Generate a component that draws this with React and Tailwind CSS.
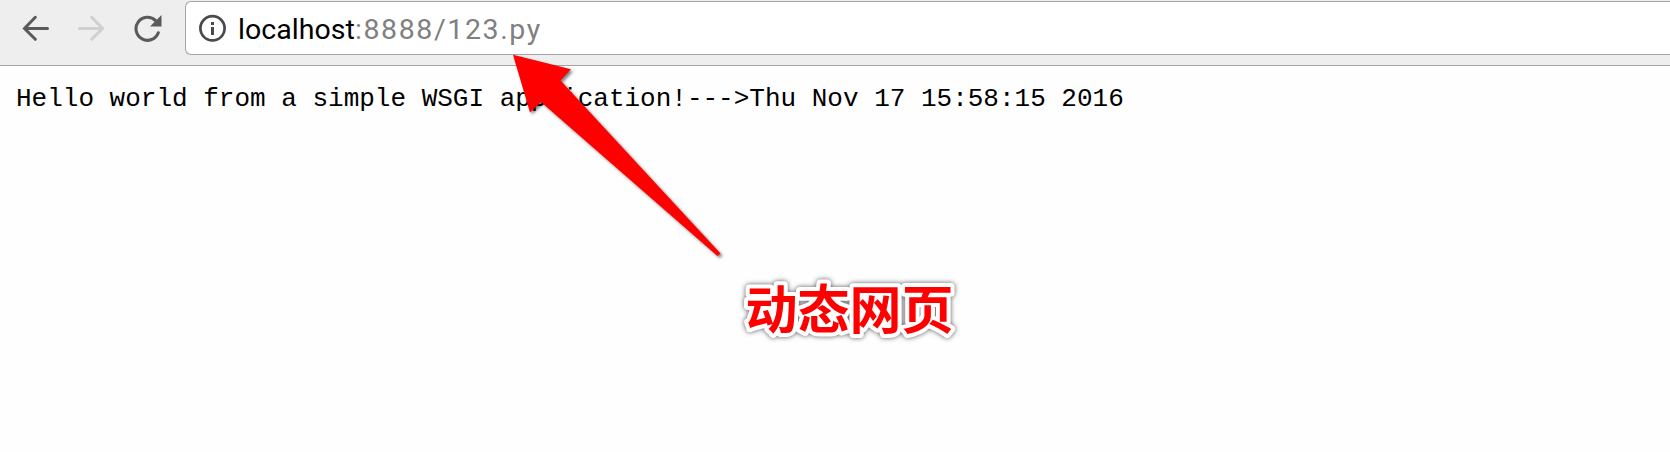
function BackIcon() {
  return (
    <svg className="h-[26px] w-[27px] shrink-0" viewBox="0 0 27 26" fill="none" stroke="#5a5a5a" strokeWidth="3" strokeLinecap="round">
      <path d="M25.5 13.5H3M13.3 2.3L2.5 13.5L13.3 24.3" />
    </svg>
  );
}

function ForwardIcon() {
  return (
    <svg className="h-[26px] w-[27px] shrink-0" viewBox="0 0 27 26" fill="none" stroke="#d0d0d0" strokeWidth="3" strokeLinecap="round">
      <path d="M1.5 13.5H24M13.7 2.3L24.5 13.5L13.7 24.3" />
    </svg>
  );
}

function ReloadIcon() {
  return (
    <svg className="h-[27px] w-[28px] shrink-0" viewBox="0 0 28 27">
      <path d="M24.3 17.8A11.5 11.5 0 1 1 21.6 5.6" fill="none" stroke="#5a5a5a" strokeWidth="3.1" strokeLinecap="round" />
      <path d="M27.5 0V11.5H16Z" fill="#5a5a5a" />
    </svg>
  );
}

function InfoIcon() {
  return (
    <svg className="h-[28px] w-[28px] shrink-0" viewBox="0 0 28 28">
      <circle cx="13.5" cy="14.3" r="12.1" fill="none" stroke="#4a4a4a" strokeWidth="2.7" />
      <path d="M12 8h3v3h-3zM12 13h3v8h-3z" fill="#4a4a4a" />
    </svg>
  );
}

export default function App() {
  return (
    <div className="relative h-[452px] w-full overflow-hidden bg-[#fefefe]">
      <header className="flex h-[66px] items-start border-b border-[#a4a4a4] bg-[#eeeeee] pt-px pl-[22px]">
        <nav className="flex h-[54px] w-[163px] shrink-0 items-center gap-[29px]">
          <BackIcon />
          <ForwardIcon />
          <ReloadIcon />
        </nav>
        <div className="flex h-[54px] flex-1 items-center rounded-l-[6px] border border-r-0 border-[#a4a4a4] bg-white pl-[13px]">
          <InfoIcon />
          <p className="mt-[3px] ml-[11px] flex font-['Roboto',sans-serif] text-[28.5px] leading-[49px] whitespace-pre">
            <span className="tracking-[0.05px] text-black">localhost</span>
            <span className="tracking-[1.6px] text-[#808080]">:8888/123.py</span>
          </p>
        </div>
      </header>
      <main className="px-4 pt-[17px]">
        <pre className="font-['Liberation_Mono',monospace] text-[26px] leading-[32px] text-black">
          {'Hello world from a simple WSGI application!--->Thu Nov 17 15:58:15 2016'}
        </pre>
      </main>
      <svg
        className="absolute top-[40px] left-[490px] h-[230px] w-[260px] drop-shadow-[2px_2px_1.5px_rgba(0,0,0,0.5)]"
        viewBox="490 40 260 230"
      >
        <path d="M513 54.7L571 69.3L560.5 80.5L720.5 253.5L717.5 256L541 102L530 112.5Z" fill="#ff0000" />
      </svg>
      <svg
        className="absolute top-[260px] left-[720px] h-[90px] w-[260px] drop-shadow-[0_0.5px_2.5px_rgba(0,0,0,0.65)]"
        viewBox="0 0 260 90"
      >
        <text
          x="25.5"
          y="69"
          className="fill-[#ff0000] stroke-white stroke-[8px] font-['Noto_Sans_CJK_SC',sans-serif] text-[52px] font-bold [paint-order:stroke_fill] [stroke-linejoin:round]"
        >
          动态网页
        </text>
      </svg>
    </div>
  );
}
